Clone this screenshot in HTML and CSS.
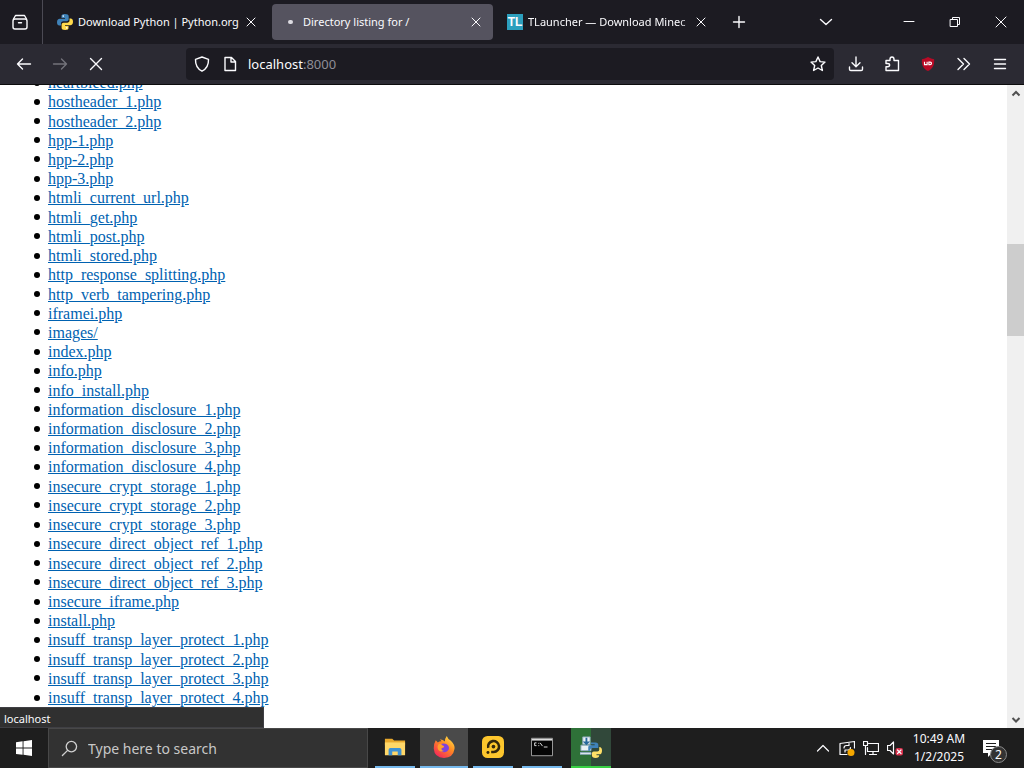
FILE: index.html
```html
<!DOCTYPE html>
<html lang="en">
<head>
<meta charset="utf-8">
<title>Directory listing for /</title>
<link rel="stylesheet" href="styles.css">
</head>
<body>
<div class="desktop">
  <header class="tabstrip">
    <button class="recent" aria-label="Recent browsing">
      <svg class="icon" viewBox="0 0 18 18"><rect x="2" y="6" width="14" height="10" rx="2"/><path d="M2.500 6 4.500 2.500h9l2 3.500M7.500 9.700h3"/></svg>
    </button>
    <div class="tabs">
      <div class="tab">
        <svg class="favicon" viewBox="0 0 16 16"><path fill="#3f82b8" d="M7.800 0C5 0 4.500 1 4.500 2v2H8v.8H2.800C1 4.800 0 6 0 8.200s1 3.300 2.300 3.300H4V9.400c0-1.300 1-2.200 2.300-2.200h3.500c1 0 1.900-.8 1.900-1.900V2.200C11.700.8 10.300 0 7.800 0"/><path fill="#ffda4b" d="M8.200 16c2.800 0 3.300-1 3.300-2v-2H8v-.8h5.200c1.800 0 2.800-1.200 2.800-3.400s-1-3.300-2.300-3.300H12.500v2.100c0 1.300-1 2.200-2.300 2.200H6.500c-1 0-1.900.8-1.900 1.900v3.100C4.600 15.200 5.700 16 8.200 16"/><circle cx="6.200" cy="2.100" r=".8" fill="#fff"/><circle cx="9.800" cy="13.900" r=".8" fill="#fff"/></svg>
        <span class="title">Download Python | Python.org</span>
        <button class="close" aria-label="Close tab"><svg class="icon" viewBox="0 0 10 10"><path d="m1 1 8 8M9 1 1 9"/></svg></button>
      </div>
      <div class="tab active">
        <span class="favicon loading"></span>
        <span class="title">Directory listing for /</span>
        <button class="close" aria-label="Close tab"><svg class="icon" viewBox="0 0 10 10"><path d="m1 1 8 8M9 1 1 9"/></svg></button>
      </div>
      <div class="tab">
        <span class="favicon launcher">TL</span>
        <span class="title fade">TLauncher — Download Minec</span>
        <button class="close" aria-label="Close tab"><svg class="icon" viewBox="0 0 10 10"><path d="m1 1 8 8M9 1 1 9"/></svg></button>
      </div>
    </div>
    <button class="newtab" aria-label="New tab"><svg class="icon" viewBox="0 0 14 14"><path d="M7 1.500v11M1.500 7h11"/></svg></button>
    <div class="window-buttons">
      <button class="all-tabs" aria-label="List all tabs"><svg class="icon" viewBox="0 0 14 14"><path d="m1.500 4.500 5.500 5 5.500-5"/></svg></button>
      <button aria-label="Minimize"><svg class="icon thin" viewBox="0 0 12 12"><path d="M1 5.500h10"/></svg></button>
      <button aria-label="Restore"><svg class="icon thin" viewBox="0 0 12 12"><path d="M1.500 3.500h7v7h-7zM3.500 3.500v-2h7v7h-2"/></svg></button>
      <button aria-label="Close"><svg class="icon thin" viewBox="0 0 12 12"><path d="m1 1 10 10M11 1 1 11"/></svg></button>
    </div>
  </header>

  <nav class="toolbar">
    <div class="nav-buttons">
      <button aria-label="Back"><svg class="icon" viewBox="0 0 16 16"><path d="M14.500 8H1.500M6.500 3 1.500 8l5 5"/></svg></button>
      <button aria-label="Forward" disabled><svg class="icon" viewBox="0 0 16 16"><path d="M1.500 8h13M9.500 3l5 5-5 5"/></svg></button>
      <button aria-label="Stop"><svg class="icon" viewBox="0 0 16 16"><path d="m2.500 2.500 11 11M13.500 2.500l-11 11"/></svg></button>
    </div>
    <div class="urlbar">
      <svg class="icon" viewBox="0 0 16 16"><path d="M8 1 14.500 3.300C14.700 9 12.500 13 8 15.200 3.500 13 1.300 9 1.500 3.300Z"/></svg>
      <svg class="icon" viewBox="0 0 16 16"><path d="M3 1.500h6.500l4 4v9H3zM9 1.500v4.500h4.500"/></svg>
      <a class="address" href="http://localhost:8000">localhost<span class="port">:8000</span></a>
      <button class="star" aria-label="Bookmark this page"><svg class="icon" viewBox="0 0 16 16"><path d="m8 1 2.100 4.600 4.900.5-3.700 3.400 1.100 5L8 12l-4.400 2.500 1.100-5L1 6.100l4.900-.5Z"/></svg></button>
    </div>
    <div class="tools">
      <button aria-label="Downloads"><svg class="icon" viewBox="0 0 16 16"><path d="M8 1v9.500M4 6.800l4 4 4-4M1.500 11v2.200c0 .8.500 1.300 1.300 1.300h10.400c.8 0 1.300-.5 1.300-1.300V11"/></svg></button>
      <button aria-label="Extensions"><svg class="icon" viewBox="0 0 16 16"><path d="M2 4.500h4V3.200C6 1.800 6.900 1 8 1s2 .8 2 2.200v1.300h4.500v10H2v-3.800h1.600c2.700 0 2.700-3.200 0-3.200H2Z"/></svg></button>
      <button aria-label="uBlock Origin"><svg class="shield" viewBox="0 0 16 16"><path fill="#b80a26" d="M8 0q3.500 2.300 7 2.500C15.500 9 13.500 13.500 8 16 2.500 13.500.5 9 1 2.500Q4.500 2.300 8 0"/><path fill="none" stroke="#fff" stroke-width="1.300" d="M4 5.500v3.200h3V5.500M9 5.800h1.500c2 0 2 2.900 0 2.900H9Z"/></svg></button>
      <button aria-label="More tools"><svg class="icon" viewBox="0 0 16 16"><path d="m2 2.500 5.500 5.500L2 13.500M8 2.500 13.500 8 8 13.500"/></svg></button>
      <button aria-label="Menu"><svg class="icon" viewBox="0 0 16 16"><path d="M2.500 3.500h11M2.500 8h11M2.500 12.500h11"/></svg></button>
    </div>
  </nav>

  <main class="viewport">
    <ul class="listing">
      <li><a href="#">heartbleed.php</a></li>
      <li><a href="#">hostheader_1.php</a></li>
      <li><a href="#">hostheader_2.php</a></li>
      <li><a href="#">hpp-1.php</a></li>
      <li><a href="#">hpp-2.php</a></li>
      <li><a href="#">hpp-3.php</a></li>
      <li><a href="#">htmli_current_url.php</a></li>
      <li><a href="#">htmli_get.php</a></li>
      <li><a href="#">htmli_post.php</a></li>
      <li><a href="#">htmli_stored.php</a></li>
      <li><a href="#">http_response_splitting.php</a></li>
      <li><a href="#">http_verb_tampering.php</a></li>
      <li><a href="#">iframei.php</a></li>
      <li><a href="#">images/</a></li>
      <li><a href="#">index.php</a></li>
      <li><a href="#">info.php</a></li>
      <li><a href="#">info_install.php</a></li>
      <li><a href="#">information_disclosure_1.php</a></li>
      <li><a href="#">information_disclosure_2.php</a></li>
      <li><a href="#">information_disclosure_3.php</a></li>
      <li><a href="#">information_disclosure_4.php</a></li>
      <li><a href="#">insecure_crypt_storage_1.php</a></li>
      <li><a href="#">insecure_crypt_storage_2.php</a></li>
      <li><a href="#">insecure_crypt_storage_3.php</a></li>
      <li><a href="#">insecure_direct_object_ref_1.php</a></li>
      <li><a href="#">insecure_direct_object_ref_2.php</a></li>
      <li><a href="#">insecure_direct_object_ref_3.php</a></li>
      <li><a href="#">insecure_iframe.php</a></li>
      <li><a href="#">install.php</a></li>
      <li><a href="#">insuff_transp_layer_protect_1.php</a></li>
      <li><a href="#">insuff_transp_layer_protect_2.php</a></li>
      <li><a href="#">insuff_transp_layer_protect_3.php</a></li>
      <li><a href="#">insuff_transp_layer_protect_4.php</a></li>
    </ul>
    <div class="scrollbar">
      <svg class="arrow" viewBox="0 0 10 10"><path d="M1.500 7 5 3.500 8.500 7"/></svg>
      <div class="track"><div class="thumb"></div></div>
      <svg class="arrow" viewBox="0 0 10 10"><path d="M1.500 3.500 5 7l3.500-3.500"/></svg>
    </div>
    <div class="status">localhost</div>
  </main>

  <footer class="taskbar">
    <button class="start" aria-label="Start"><svg viewBox="0 0 16 16"><path fill="#fff" d="M0 2.200 6.600 1.300v6.300H0zM7.500 1.200 16 0v7.600H7.500zM0 8.500h6.600v6.300L0 13.900zM7.500 8.500H16V16l-8.500-1.200z"/></svg></button>
    <label class="search">
      <svg class="icon" viewBox="0 0 18 18"><circle cx="11" cy="7" r="5.500"/><path d="m7 11-5.500 5.500"/></svg>
      <input type="text" placeholder="Type here to search">
    </label>
    <div class="apps">
      <button class="app" aria-label="File Explorer"><svg viewBox="0 0 24 24"><path fill="#e8a82c" d="M1 3h8l2 2h12v5H1z"/><path fill="#ffd768" d="M1 7h22v14H1z"/><path fill="#3e91d4" d="M5 21v-6q0-2 2-2h10q2 0 2 2v6h-4v-4H9v4z"/></svg></button>
      <button class="app current" aria-label="Firefox"><svg viewBox="0 0 24 24"><defs><linearGradient id="fire" x1=".9" y1="0" x2=".2" y2="1"><stop offset="0" stop-color="#ffe84a"/><stop offset=".45" stop-color="#ff8a22"/><stop offset="1" stop-color="#f4215d"/></linearGradient></defs><path fill="url(#fire)" d="M3 4.500 5.300 7q2-1.500 4-1.200L7.500 3.500Q11 3.800 13 6q0-3.500 2-6 1 3 4.500 5.200Q24 9.500 23.500 14 22 24 12 24 1.500 23.500.8 13.500.5 8.500 3 4.500"/><path fill="#7e42dc" d="M8 9.500q3-2.500 7-.5 3.500 2.500 2 6-2 3.500-6 2.500-4-1.500-3-4 2.500.5 4-1.500L8 11z"/><path fill="#ff9f2e" d="M6.500 8.500q3 .2 4 1.800 2 .2 1.500 1.600L9.300 13q-.5 3 3 3.200-3.500 2-6.500-1-2-3.500.7-6.700"/></svg></button>
      <button class="app" aria-label="Player"><svg viewBox="0 0 24 24"><rect width="24" height="24" rx="6" fill="#fdc62d"/><path fill="none" stroke="#33270c" stroke-width="2.800" d="M6.800 13A6 6 0 1 1 12.700 17.500H10"/><circle cx="12.500" cy="11.500" r="2" fill="#33270c"/><circle cx="6.500" cy="18" r="1.600" fill="#33270c"/></svg></button>
      <button class="app" aria-label="Command Prompt"><svg viewBox="0 0 24 24"><path fill="#050505" stroke="#aaa" d="M.5 2.500h23v19H.5z"/><path fill="#ddd" d="M1 3h22v2H1z"/><path fill="none" stroke="#eee" d="M6 7.500H4v3h2M8 8h1M8 10.500h1M10 7.500l2.500 3.500M14 12h4"/></svg></button>
      <button class="app busy" aria-label="Python installer"><svg viewBox="0 0 24 24"><path fill="#e9f0f5" stroke="#8ca9bd" d="M3 1h8v8H3zM1 10h11v6H1zM0 18h12v2H0z"/><path fill="#28689c" d="M6 2h2v4h3l-4 4-4-4h3z"/><path fill="#3f82b8" d="M12 7h5q3 0 3 3v3h-6q-3 0-3 3H9v-4q0-2 2-2h5V9h-4z"/><path fill="#ffdf68" d="M21 12q3 0 3 4t-3 4h-3v1h3q0 3-4 3t-4-3v-2q0-2 2-2h4q2 0 2-2z"/></svg></button>
    </div>
    <div class="tray">
      <button aria-label="Show hidden icons"><svg class="icon" viewBox="0 0 16 16"><path d="m2.500 11 5.500-5.500 5.500 5.500"/></svg></button>
      <button aria-label="Windows Update"><svg class="icon" viewBox="0 0 16 16"><path d="M8 14.500H1V3.500L15.500 1.500V8M5 8q0-2.500 2.500-2.500H10V3.700M11.500 7.500q0 2.500-2.500 2.500H6v2"/><circle cx="12" cy="12.500" r="3.500" fill="#f6a800" stroke="none"/></svg></button>
      <button aria-label="Network"><svg class="icon" viewBox="0 0 16 16"><path d="M5.500 3.500h10v8h-11v-4M10 11.500v3M6.500 14.500h7M.5 1.500h4v4h-4zM2.500 5.500v9"/></svg></button>
      <button aria-label="Sound muted"><svg class="icon" viewBox="0 0 16 16"><path d="M.5 5.500H3l3.500-3.500v12L3 10.500H.5z"/><rect x="8.500" y="8" width="7.500" height="7.500" rx="2" fill="#d9304c" stroke="none"/><path d="m10.500 10 3.500 3.500M14 10l-3.500 3.500"/></svg></button>
    </div>
    <div class="clock"><span>10:49 AM</span><span>1/2/2025</span></div>
    <button class="notices" aria-label="2 notifications"><svg viewBox="0 0 18 18"><path fill="#fff" d="M1 1h16v13h-7l-4 4v-4H1z"/><path stroke="#1e1e1e" d="M4 4.500h10M4 7.500h10M4 10.500h7"/></svg><span class="count">2</span></button>
  </footer>
</div>
</body>
</html>
```
FILE: styles.css
```css
* { box-sizing: border-box; }

body {
  margin: 0;
  font-family: "Noto Sans", "Open Sans", sans-serif;
  font-size: 12px;
  color: #fbfbfe;
}

button {
  display: flex;
  align-items: center;
  justify-content: center;
  flex: none;
  margin: 0;
  padding: 0;
  border: 0;
  background: none;
  color: inherit;
  font: inherit;
}

svg { display: block; flex: none; }

.icon {
  width: 16px;
  height: 16px;
  fill: none;
  stroke: currentColor;
  stroke-width: 1.4;
  stroke-linecap: round;
  stroke-linejoin: round;
}
.icon.thin { width: 12px; height: 12px; stroke-width: 1; }

.desktop { display: flex; flex-direction: column; height: 100vh; }

/* Tabs */
.tabstrip { display: flex; align-items: center; flex: none; height: 44px; background: #1c1b22; }
.recent { width: 43px; height: 44px; padding-right: 3px; border-right: 1px solid #4b4a54; }
.recent .icon { width: 18px; height: 18px; }
.tabs { display: flex; gap: 4px; flex: 0 1 671px; min-width: 0; margin-left: 4px; }
.tab {
  display: flex;
  align-items: center;
  flex: 1;
  min-width: 0;
  height: 36px;
  padding: 0 12px 0 10px;
  border-radius: 4px;
}
.active { background: #55535f; }
.favicon { flex: none; width: 16px; height: 16px; margin-right: 5px; }
.loading { display: grid; place-items: center; }
.loading::before { content: ""; width: 5px; height: 4px; border-radius: 2px; background: #dddce2; }
.launcher {
  background: #2c9fbd;
  font-family: "Liberation Sans", sans-serif;
  font-size: 12px;
  font-weight: bold;
  line-height: 16px;
  text-align: center;
}
.title {
  flex: 1;
  min-width: 0;
  overflow: hidden;
  font-size: 11px;
  line-height: 22px;
  white-space: nowrap;
}
.fade { -webkit-mask-image: linear-gradient(to left, transparent, #000 16px); mask-image: linear-gradient(to left, transparent, #000 16px); }
.close { width: 10px; height: 20px; }
.close .icon { width: 10px; height: 10px; stroke-width: 1; }
.newtab { width: 42px; height: 36px; }
.newtab .icon { width: 14px; height: 14px; }
.window-buttons { display: flex; margin-left: auto; }
.window-buttons button { width: 46px; height: 44px; }
.window-buttons .all-tabs { width: 40px; margin-right: 40px; }
.all-tabs .icon { width: 14px; height: 14px; }

/* Navigation toolbar */
.toolbar {
  display: flex;
  align-items: center;
  flex: none;
  height: 41px;
  background: #2b2a33;
  border-bottom: 1px solid #0c0c0d;
}
.nav-buttons { display: flex; flex: none; width: 186px; padding-left: 6px; }
.nav-buttons button { width: 36px; height: 32px; }
.nav-buttons button:disabled { color: #74737b; }
.urlbar {
  display: flex;
  align-items: center;
  flex: 1;
  gap: 12px;
  height: 32px;
  padding: 0 8px;
  border-radius: 4px;
  background: #1c1b22;
}
.address { flex: 1; margin-left: -2px; font-size: 13px; line-height: 20px; color: #fbfbfe; text-decoration: none; }
.port { color: #8f8e96; }
.tools { display: flex; flex: none; padding: 0 6px 0 4px; }
.tools button { width: 36px; height: 32px; }
.shield { width: 14px; height: 14px; }

/* Page */
.viewport {
  position: relative;
  display: flex;
  flex: 1;
  min-height: 0;
  overflow: hidden;
  background: #fff;
  color: #000;
}
.listing {
  display: flex;
  flex-direction: column;
  flex: 1;
  margin: -12px 0 21px;
  padding-left: 34px;
  font-family: "Liberation Serif", serif;
  font-size: 16px;
  line-height: 19px;
  list-style: none;
}
.listing li { display: flex; align-items: center; flex: 1; gap: 8px; }
.listing li::before { content: ""; width: 6px; height: 6px; border-radius: 50%; background: #000; }
.listing a { color: #0062b1; }
.scrollbar { display: flex; flex-direction: column; align-items: center; flex: none; width: 17px; background: #f0f0f0; }
.arrow { width: 10px; height: 17px; fill: none; stroke: #505050; stroke-width: 2; }
.track { display: flex; flex-direction: column; flex: 1; width: 100%; padding-top: 142px; }
.thumb { height: 92px; background: #cdcdcd; }
.status {
  position: absolute;
  bottom: 0;
  left: 0;
  width: 264px;
  height: 21px;
  padding-left: 4px;
  border: 1px solid #3f3f44;
  border-left: 0;
  background: #303030;
  color: #fbfbfe;
  font-size: 11px;
  line-height: 21px;
}

/* Taskbar */
.taskbar { display: flex; flex: none; height: 40px; background: #1e1e1e; }
.start { width: 48px; }
.start svg { width: 16px; height: 16px; }
.search {
  display: flex;
  align-items: center;
  flex: 0 1 320px;
  min-width: 0;
  gap: 10px;
  padding: 0 12px;
  border: 1px solid #484848;
  background: #323232;
  color: #d0d0d0;
}
.search .icon { width: 17px; height: 17px; }
.search input {
  flex: 1;
  min-width: 0;
  padding: 0;
  border: 0;
  outline: 0;
  background: none;
  color: #fff;
  font: inherit;
  font-size: 14px;
}
.search input::placeholder { color: #c8c8c8; opacity: 1; }
.apps { display: flex; gap: 9px; margin-left: 7px; }
.app { width: 40px; border-bottom: 2px solid #76b9ed; }
.app svg { width: 22px; height: 22px; }
.current { width: 48px; margin: 0 -4px; background: #4a4a4a; }
.busy { background: linear-gradient(to right, #2e7138 50%, #31483a 50%); border-color: #38d044; }
.tray { display: flex; margin-left: auto; }
.tray button { width: 24px; }
.tray .icon { stroke-width: 1.2; }
.clock {
  display: flex;
  flex-direction: column;
  align-items: center;
  justify-content: center;
  width: 64px;
  line-height: 18px;
}
.notices { position: relative; width: 53px; padding-right: 14px; }
.notices svg { width: 18px; height: 18px; }
.count {
  position: absolute;
  top: 18px;
  left: 19px;
  width: 17px;
  height: 17px;
  border: 1px solid #8a8a8a;
  border-radius: 50%;
  background: #333;
  line-height: 15px;
  text-align: center;
}
```
